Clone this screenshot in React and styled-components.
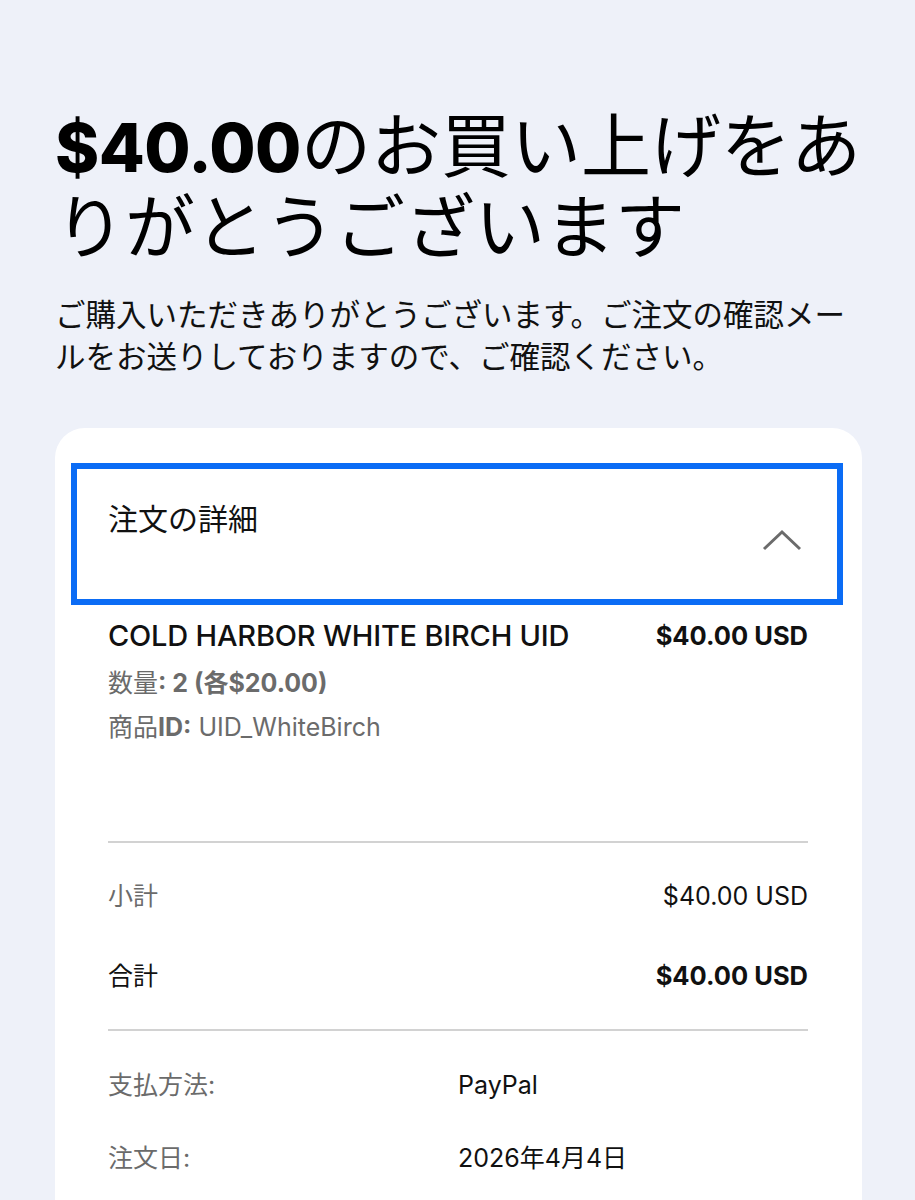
import React from "react";
import styled, { createGlobalStyle } from "styled-components";

const GlobalStyle = createGlobalStyle`
    body {
        margin: 0;
        background: #eef1f9;
        font-family: Inter, "Noto Sans CJK JP", sans-serif;
        color: #111;
    }
`;

const order = {
    total: "$40.00",
    item: { name: "COLD HARBOR WHITE BIRCH UID", price: "$40.00 USD", qty: 2, each: "$20.00", id: "UID_WhiteBirch" },
    subtotal: "$40.00 USD",
    grand: "$40.00 USD",
    payment: "PayPal",
    date: "2026年4月4日",
};

export default function App() {
    return (
        <>
            <GlobalStyle />
            <Page>
                <Title>
                    <Amount>{order.total}</Amount>のお買い上げをありがとうございます
                </Title>
                <Lead>
                    ご購入いただきありがとうございます。ご注文の確認メールをお送りしておりますので、ご確認ください。
                </Lead>

                <Card>
                    <Toggle>
                        <span>注文の詳細</span>
                        <Chevron viewBox="0 0 40 22" aria-hidden="true">
                            <polyline points="2,20 20,3 38,20" />
                        </Chevron>
                    </Toggle>

                    <Details>
                        <Item>
                            <ItemInfo>
                                <ItemName>{order.item.name}</ItemName>
                                <Meta>
                                    数量<b>: {order.item.qty} (各{order.item.each})</b>
                                </Meta>
                                <Meta>
                                    商品<b>ID:</b> {order.item.id}
                                </Meta>
                            </ItemInfo>
                            <ItemPrice>{order.item.price}</ItemPrice>
                        </Item>

                        <Summary>
                            <SumRow>
                                <SumLabel>小計</SumLabel>
                                <span>{order.subtotal}</span>
                            </SumRow>
                            <SumRow strong>
                                <SumLabel strong>合計</SumLabel>
                                <span>{order.grand}</span>
                            </SumRow>
                        </Summary>

                        <Info>
                            <InfoLabel>支払方法:</InfoLabel>
                            <span>{order.payment}</span>
                            <InfoLabel>注文日:</InfoLabel>
                            <span>{order.date}</span>
                        </Info>
                    </Details>
                </Card>
            </Page>
        </>
    );
}

const Page = styled.div`
    padding: 107px 53px 0 55px;
    min-height: 1200px;
    box-sizing: border-box;
`;

const Title = styled.h1`
    margin: 0;
    font-size: 70px;
    line-height: 80px;
    font-weight: 400;
    color: #000;
`;

const Amount = styled.span`
    font-size: 67px;
    font-weight: 800;
    letter-spacing: -0.5px;
`;

const Lead = styled.p`
    margin: 26px 0 0;
    font-size: 30.5px;
    line-height: 42px;
    color: #111;
`;

const Card = styled.section`
    margin-top: 50px;
    background: #fff;
    border-radius: 30px 30px 0 0;
    padding: 35px 19px 40px 16px;
`;

const Toggle = styled.div`
    display: flex;
    justify-content: space-between;
    align-items: flex-start;
    height: 142px;
    box-sizing: border-box;
    border: 6px solid #0b6cf5;
    padding: 30px 35px 0 31px;
    font-size: 30px;
    line-height: 40px;
    color: #111;
`;

const Chevron = styled.svg`
    width: 40px;
    height: 22px;
    margin-top: 30px;
    fill: none;
    stroke: #6b6b6b;
    stroke-width: 3;
`;

const Details = styled.div`
    padding: 0 35px 0 37px;
`;

const Item = styled.div`
    display: flex;
    justify-content: space-between;
    align-items: flex-start;
    padding: 13px 0 92px;
    border-bottom: 2px solid #d2d2d2;
`;

const ItemInfo = styled.div`
    display: flex;
    flex-direction: column;
`;

const ItemName = styled.div`
    font-size: 29px;
    line-height: 36px;
    font-weight: 500;
    color: #111;
    margin-bottom: 7px;
    letter-spacing: -0.2px;
`;

const Meta = styled.div`
    font-size: 25px;
    line-height: 44px;
    color: #6b6b6b;

    b {
        font-weight: 700;
    }
`;

const ItemPrice = styled.div`
    font-size: 25.5px;
    line-height: 36px;
    font-weight: 700;
    color: #111;
`;

const Summary = styled.div`
    display: flex;
    flex-direction: column;
    gap: 40px;
    padding: 33px 0 33px;
    border-bottom: 2px solid #d2d2d2;
`;

const SumRow = styled.div`
    display: flex;
    justify-content: space-between;
    font-size: ${(p) => (p.strong ? "25.5px" : "25px")};
    line-height: 40px;
    font-weight: ${(p) => (p.strong ? 700 : 400)};
    color: #111;
`;

const SumLabel = styled.span`
    font-size: 25px;
    font-weight: 400;
    color: ${(p) => (p.strong ? "#111" : "#6b6b6b")};
`;

const Info = styled.div`
    display: grid;
    grid-template-columns: 350px 1fr;
    row-gap: 33px;
    padding-top: 34px;
    font-size: 25px;
    line-height: 40px;
    color: #111;
`;

const InfoLabel = styled.span`
    color: #6b6b6b;
`;
